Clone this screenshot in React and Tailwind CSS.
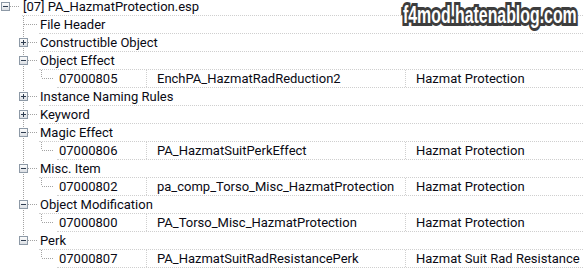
import React from "react";

// tree rows of the plugin view
const rows = [
  { level: 0, box: "open", text: "[07] PA_HazmatProtection.esp" },
  { level: 1, text: "File Header" },
  { level: 1, box: "closed", text: "Constructible Object" },
  { level: 1, box: "open", text: "Object Effect" },
  { level: 2, id: "07000805", edid: "EnchPA_HazmatRadReduction2", name: "Hazmat Protection" },
  { level: 1, box: "closed", text: "Instance Naming Rules" },
  { level: 1, box: "closed", text: "Keyword" },
  { level: 1, box: "open", text: "Magic Effect" },
  { level: 2, id: "07000806", edid: "PA_HazmatSuitPerkEffect", name: "Hazmat Protection" },
  { level: 1, box: "open", text: "Misc. Item" },
  { level: 2, id: "07000802", edid: "pa_comp_Torso_Misc_HazmatProtection", name: "Hazmat Protection" },
  { level: 1, box: "open", text: "Object Modification" },
  { level: 2, id: "07000800", edid: "PA_Torso_Misc_HazmatProtection", name: "Hazmat Protection" },
  { level: 1, box: "open", text: "Perk", last: true },
  { level: 2, id: "07000807", edid: "PA_HazmatSuitRadResistancePerk", name: "Hazmat Suit Rad Resistance", parentLast: true },
];

const LINE = "#a3a3a3";

const Box = ({ x, open }) => (
  <g>
    <rect x={x + 0.5} y={4.5} width={8} height={8} fill="url(#bx)" stroke="#8d99a6" />
    <rect x={x + 2} y={8} width={5} height={1} fill="#2f3d50" />
    {!open && <rect x={x + 4} y={6} width={1} height={5} fill="#2f3d50" />}
  </g>
);

const Gutter = ({ row }) => {
  const w = row.level === 0 ? 22 : row.level === 1 ? 39 : 57;
  return (
    <svg width={w} height={18} className="shrink-0 block">
      <defs>
        <linearGradient id="bx" x1="0" y1="0" x2="0" y2="1">
          <stop offset="0" stopColor="#ffffff" />
          <stop offset="1" stopColor="#d9dde2" />
        </linearGradient>
      </defs>
      {row.level === 0 && (
        <>
          <line x1={10} y1={8.5} x2={20} y2={8.5} stroke={LINE} strokeDasharray="1 1" />
          <Box x={1} open />
        </>
      )}
      {row.level === 1 && (
        <>
          <line x1={23.5} y1={0} x2={23.5} y2={row.last ? 8 : 18} stroke={LINE} strokeDasharray="1 1" />
          <line x1={row.box ? 28 : 24} y1={8.5} x2={37} y2={8.5} stroke={LINE} strokeDasharray="1 1" />
          {row.box && <Box x={19} open={row.box === "open"} />}
        </>
      )}
      {row.level === 2 && (
        <>
          {!row.parentLast && (
            <line x1={23.5} y1={0} x2={23.5} y2={18} stroke={LINE} strokeDasharray="1 1" />
          )}
          <line x1={41.5} y1={0} x2={41.5} y2={8} stroke={LINE} strokeDasharray="1 1" />
          <line x1={42} y1={8.5} x2={53} y2={8.5} stroke={LINE} strokeDasharray="1 1" />
        </>
      )}
    </svg>
  );
};

const Row = ({ row }) => (
  <div className="flex h-[18px]">
    <Gutter row={row} />
    {row.level < 2 ? (
      <div className="flex-1 border-b border-dotted border-[#cfcfcf] pl-px leading-[17px] whitespace-nowrap">
        {row.text}
      </div>
    ) : (
      <div className="flex flex-1 border-b border-dotted border-[#cfcfcf] leading-[17px] whitespace-nowrap">
        <div className="w-[89px] pl-[2px]">{row.id}</div>
        <div className="w-[259px] pl-[10px] border-l border-dotted border-[#cfcfcf]">{row.edid}</div>
        <div className="flex-1 pl-[10px] border-l border-dotted border-[#cfcfcf]">{row.name}</div>
      </div>
    )}
  </div>
);

export default function App() {
  return (
    <div className="relative w-[583px] h-[268px] overflow-hidden bg-white text-[13px] text-[#0a0a14] font-['Roboto',sans-serif]">
      <div className="-mt-[2px]">
        {rows.map((r, i) => (
          <Row key={i} row={r} />
        ))}
      </div>
      {/* blog watermark */}
      <div className="absolute left-[403px] top-[2px] origin-left scale-x-[0.69] text-[23px] font-black leading-[27px] text-white font-['Liberation_Sans',sans-serif] [-webkit-text-stroke:6px_#3d3d3d] [paint-order:stroke_fill] whitespace-nowrap">
        f4mod.hatenablog.com
      </div>
    </div>
  );
}
